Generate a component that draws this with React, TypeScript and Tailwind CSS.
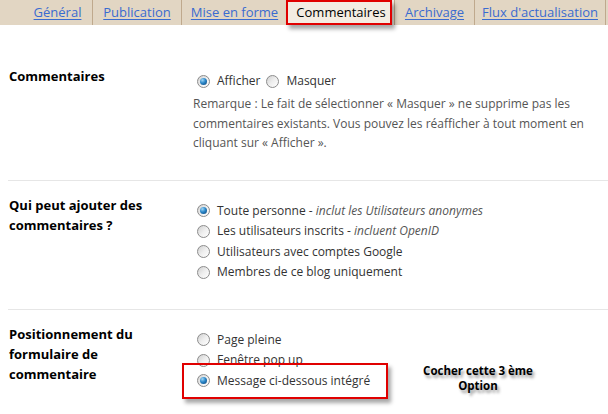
import React from 'react';

const tabs: [string, string][] = [
  ['Général', 'w-[70px]'],
  ['Publication', 'w-[89px]'],
  ['Mise en forme', 'w-[106px]'],
  ['Commentaires', 'w-[107px]'],
  ['Archivage', 'w-[80px]'],
  ["Flux d'actualisation", 'w-[131px]'],
];

const Radio: React.FC<{ checked?: boolean }> = ({ checked = false }) => (
  <span className="relative inline-flex h-[13px] w-[13px] shrink-0 items-center justify-center rounded-full border border-[#8c8c8c] bg-gradient-to-br from-[#d0d0d0] via-[#eeeeee] to-white">
    {checked && (
      <span className="h-[7px] w-[7px] rounded-full bg-[radial-gradient(circle_at_35%_30%,#9fd6f5_0%,#2a86c8_45%,#0b3f73_100%)]" />
    )}
  </span>
);

const Option: React.FC<{ checked?: boolean; label: string; note?: string }> = ({ checked, label, note }) => (
  <div className="flex h-[20.5px] items-center whitespace-nowrap">
    <Radio checked={checked} />
    <span className="ml-[7px] text-[#333]">
      {label}
      {note && (
        <>
          {' - '}
          <i className="text-[#555]">{note}</i>
        </>
      )}
    </span>
  </div>
);

const Label: React.FC<{ children: React.ReactNode }> = ({ children }) => (
  <div className="w-[188px] shrink-0 pl-[9px] text-[13px] font-bold leading-[20.4px] text-black">{children}</div>
);

export default function App() {
  return (
    <div className="h-[414px] w-[608px] overflow-hidden bg-white text-[12px] font-['Open_Sans',sans-serif]">
      {/* tab bar */}
      <div className="relative flex h-[25px] bg-[#e2d6c3] pl-[23px]">
        {tabs.map(([t, w]) =>
          t === 'Commentaires' ? (
            <div key={t} className={`relative flex shrink-0 items-center justify-center whitespace-nowrap border-r border-[#bfa98d] bg-[#f3ece2] text-[13px] text-black ${w}`}>
              {t}
              <div className="absolute -left-[2px] top-0 h-[25px] w-[106px] border-2 border-[#e00000] shadow-[3px_4px_4px_rgba(0,0,0,0.35)]" />
            </div>
          ) : (
            <div key={t} className={`flex shrink-0 items-center justify-center whitespace-nowrap border-r border-[#bfa98d] text-[13px] ${w}`}>
              <a href="#" className="text-[#3a6bd0] underline underline-offset-2">
                {t}
              </a>
            </div>
          )
        )}
      </div>

      {/* Commentaires */}
      <div className="flex pt-[41px] pb-[27px]">
        <Label>Commentaires</Label>
        <div className="mt-[5px] pl-[9px]">
          <div className="flex h-[20px] items-center">
            <Radio checked />
            <span className="ml-[7px] mr-[6px] text-[#333]">Afficher</span>
            <Radio />
            <span className="ml-[7px] text-[#333]">Masquer</span>
          </div>
          <p className="-ml-[4px] mt-[3px] whitespace-nowrap leading-[19.5px] text-[#555]">
            Remarque : Le fait de sélectionner « Masquer » ne supprime pas les
            <br />
            commentaires existants. Vous pouvez les réafficher à tout moment en
            <br />
            cliquant sur « Afficher ».
          </p>
        </div>
      </div>

      <div className="ml-[8px] border-t border-[#e6e6e6]" />

      {/* Qui peut ajouter */}
      <div className="flex pt-[14px] pb-[26px]">
        <Label>
          Qui peut ajouter des
          <br />
          commentaires ?
        </Label>
        <div className="mt-[6px] pl-[9px]">
          <Option checked label="Toute personne" note="inclut les Utilisateurs anonymes" />
          <Option label="Les utilisateurs inscrits" note="incluent OpenID" />
          <Option label="Utilisateurs avec comptes Google" />
          <Option label="Membres de ce blog uniquement" />
        </div>
      </div>

      <div className="ml-[8px] border-t border-[#e6e6e6]" />

      {/* Positionnement */}
      <div className="relative flex pt-[14px]">
        <Label>
          Positionnement du
          <br />
          formulaire de
          <br />
          commentaire
        </Label>
        <div className="relative mt-[6px] pl-[9px]">
          <Option label="Page pleine" />
          <Option label="Fenêtre pop up" />
          <Option checked label="Message ci-dessous intégré" />
          <div className="absolute left-[-6px] top-[33px] h-[36px] w-[206px] border-[2.5px] border-[#e00000] shadow-[3px_4px_4px_rgba(0,0,0,0.35)]" />
        </div>
        <div className="absolute left-[408px] top-[53px] w-[140px] whitespace-nowrap text-center text-[11.5px] font-bold leading-[15px] text-black [text-shadow:2px_3px_3px_rgba(0,0,0,0.4)]">
          Cocher cette 3 ème
          <br />
          Option
        </div>
      </div>
    </div>
  );
}
